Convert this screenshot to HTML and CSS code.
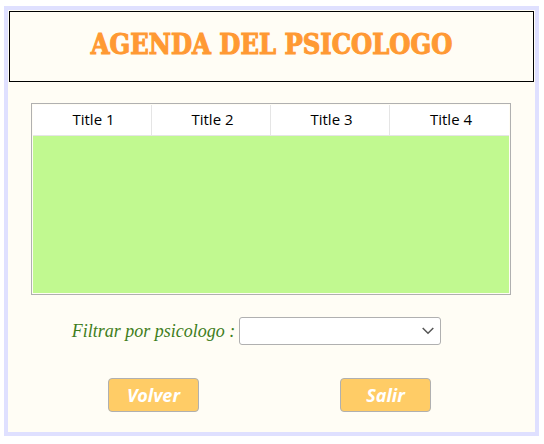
FILE: index.html
```html
<!DOCTYPE html>
<html lang="es">
<head>
<meta charset="utf-8">
<title>Agenda del psicologo</title>
<link rel="stylesheet" href="styles.css">
</head>
<body>
<main class="window">
  <header class="banner"><h1 class="title">AGENDA DEL PSICOLOGO</h1></header>
  <div class="content">
    <div class="table-frame">
      <table class="agenda">
        <thead>
          <tr><th scope="col">Title 1</th><th scope="col">Title 2</th><th scope="col">Title 3</th><th scope="col">Title 4</th></tr>
        </thead>
      </table>
    </div>
    <div class="filter">
      <label class="filter-label" for="psicologo">Filtrar por psicologo :</label>
      <div class="select-box">
        <select id="psicologo" class="select"><option value=""></option></select>
        <svg class="chevron" viewBox="0 0 12 8" aria-hidden="true"><path d="M0.7 1L6 6.3L11.3 1"/></svg>
      </div>
    </div>
    <div class="actions">
      <button type="button" class="button">Volver</button>
      <button type="button" class="button">Salir</button>
    </div>
  </div>
</main>
</body>
</html>
```

FILE: styles.css
```css
* {
  box-sizing: border-box;
}

body {
  margin: 0;
  padding: 6px 5px 8px 4px;
  background: #fff;
  font-family: "Open Sans", "Noto Sans", sans-serif;
}

.window {
  border: 4px solid #dfe0ff;
  padding: 1px;
  background: #fffdf5;
}

.banner {
  height: 71px;
  padding-top: 17px;
  border: 1px solid #000;
  text-align: center;
}

.title {
  margin: 0;
  color: #ff9933;
  font-family: "DejaVu Serif Condensed", "DejaVu Serif", serif;
  font-size: 27px;
  line-height: 32px;
  font-weight: 700;
  white-space: nowrap;
  -webkit-text-stroke: 1px #ff9933;
}

.content {
  padding: 21px 23px 19px 22px;
}

.table-frame {
  height: 192px;
  border: 1px solid #b0b0b0;
  padding: 1px;
  background: #c1f990 content-box;
}

.agenda {
  width: 100%;
  border-collapse: separate;
  border-spacing: 0;
  table-layout: fixed;
}

.agenda th {
  height: 31px;
  padding: 0 0 2px 3px;
  border-right: 1px solid #e5e5e5;
  border-bottom: 1px solid #e5e5e5;
  background: #fff;
  color: #000;
  font-size: 15px;
  line-height: 20px;
  font-weight: 400;
}

.agenda th:last-child {
  border-right: 0;
}

.filter {
  display: flex;
  justify-content: center;
  align-items: center;
  gap: 4px;
  margin-top: 22px;
  padding-right: 29px;
}

.filter-label {
  color: #3f7d1c;
  font-family: "Liberation Serif", serif;
  font-size: 18px;
  line-height: 24px;
  font-style: italic;
  white-space: nowrap;
}

.select-box {
  position: relative;
  width: 202px;
}

.select {
  display: block;
  width: 100%;
  height: 28px;
  border: 1px solid #b0b0b0;
  border-radius: 3px;
  background: #fff;
  appearance: none;
}

.chevron {
  position: absolute;
  top: 10px;
  right: 7px;
  width: 12px;
  height: 8px;
  fill: none;
  stroke: #555;
  stroke-width: 1.5;
  pointer-events: none;
}

.actions {
  display: flex;
  justify-content: space-between;
  margin-top: 33px;
  padding: 0 80px 0 77px;
}

.button {
  width: 91px;
  height: 34px;
  padding: 0;
  border: 1px solid #b0b0b0;
  border-radius: 4px;
  background: #ffcc66;
  color: #fff;
  font-family: "Noto Sans", "Open Sans", sans-serif;
  font-size: 18px;
  line-height: 24px;
  font-style: italic;
  font-weight: 700;
}
```
